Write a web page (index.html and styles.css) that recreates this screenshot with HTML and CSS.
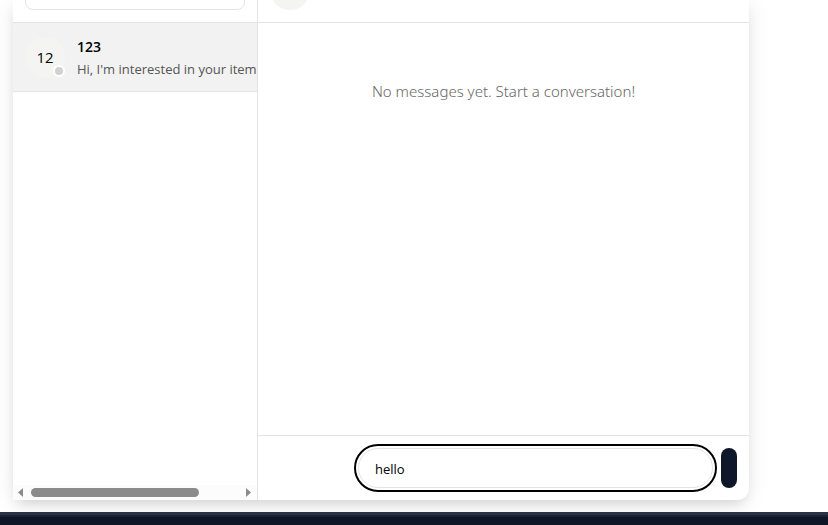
FILE: index.html
```html
<!DOCTYPE html>
<html lang="en">
<head>
<meta charset="utf-8">
<meta name="viewport" content="width=device-width, initial-scale=1">
<title>Messages</title>
<link rel="stylesheet" href="styles.css">
</head>
<body>
<main class="chat">
  <aside class="sidebar">
    <div class="search"><input class="search-input" type="search" aria-label="Search conversations"></div>
    <button class="conversation" type="button">
      <span class="avatar">12<span class="status"></span></span>
      <span class="summary">
        <span class="name">123</span>
        <span class="preview">Hi, I'm interested in your item</span>
      </span>
    </button>
    <div class="scrollbar" aria-hidden="true">
      <svg class="arrow" viewBox="0 0 5 9"><path d="M5 0V9L0 4.500Z"/></svg>
      <div class="track"><div class="thumb"></div></div>
      <svg class="arrow" viewBox="0 0 5 9"><path d="M0 0V9L5 4.500Z"/></svg>
    </div>
  </aside>
  <section class="thread">
    <header class="thread-header"><span class="contact-avatar"></span></header>
    <div class="messages"><p class="empty">No messages yet. Start a conversation!</p></div>
    <form class="composer">
      <input class="message-input" type="text" value="hello" aria-label="Message">
      <button class="send" type="submit" aria-label="Send"></button>
    </form>
  </section>
</main>
<footer class="footer"></footer>
</body>
</html>
```
FILE: styles.css
```css
* { box-sizing: border-box; }

body {
  margin: 0;
  min-height: 100vh;
  display: flex;
  flex-direction: column;
  overflow: hidden;
  background: #fff;
  color: #000;
  font-family: "Open Sans", "Noto Sans", sans-serif;
}

input, button { font: inherit; color: inherit; }

.chat {
  flex: 1;
  display: flex;
  margin: 0 79px 12px 13px;
  background: #fff;
  border-radius: 0 0 12px 0;
  box-shadow: 0 0 25px rgba(0, 0, 0, .07), 0 8px 14px -4px rgba(0, 0, 0, .14);
}

.sidebar {
  flex: 0 0 245px;
  display: flex;
  flex-direction: column;
  border-right: 1px solid #e4e4e4;
}

.search {
  height: 23px;
  display: flex;
  align-items: flex-end;
  padding: 0 12px 12px;
  border-bottom: 1px solid #e4e4e4;
  overflow: hidden;
}

.search-input {
  flex: 1;
  min-width: 0;
  height: 36px;
  border: 1px solid #e4e4e4;
  border-radius: 8px;
  background: #fff;
}

.conversation {
  display: flex;
  align-items: center;
  gap: 12px;
  height: 69px;
  padding: 0 0 0 12px;
  border: 0;
  border-bottom: 1px solid #e4e4e4;
  background: #f2f2f2;
  text-align: left;
  overflow: hidden;
}

.avatar {
  position: relative;
  flex: none;
  width: 40px;
  height: 40px;
  border-radius: 50%;
  background: #f4f4f3;
  font-size: 15px;
  line-height: 40px;
  text-align: center;
}

.status {
  position: absolute;
  right: 0;
  bottom: 0;
  width: 12px;
  height: 12px;
  border: 2px solid #fff;
  border-radius: 50%;
  background: #d1d1d1;
}

.summary {
  display: flex;
  flex-direction: column;
  white-space: nowrap;
}

.name {
  font-size: 14px;
  font-weight: 600;
  line-height: 24px;
}

.preview {
  color: #555;
  font-size: 13px;
  line-height: 20px;
}

.scrollbar {
  display: flex;
  align-items: center;
  gap: 8px;
  height: 15px;
  margin-top: auto;
  padding: 0 6px 0 5px;
  background: #fcfcfc;
}

.arrow {
  width: 5px;
  height: 9px;
  fill: #8b8b8b;
}

.track { flex: 1; }

.thumb {
  width: 81%;
  height: 9px;
  border-radius: 5px;
  background: #8b8b8b;
}

.thread {
  flex: 1;
  min-width: 0;
  display: flex;
  flex-direction: column;
}

.thread-header {
  height: 23px;
  display: flex;
  align-items: flex-end;
  padding: 0 12px 12px;
  border-bottom: 1px solid #e4e4e4;
  overflow: hidden;
}

.contact-avatar {
  flex: none;
  width: 40px;
  height: 40px;
  border-radius: 50%;
  background: #f4f4f3;
}

.messages {
  flex: 1;
  padding: 56px 16px;
}

.empty {
  margin: 0;
  color: #666;
  font-family: "Noto Sans", "Open Sans", sans-serif;
  font-size: 15px;
  font-weight: 300;
  line-height: 24px;
  text-align: center;
}

.composer {
  display: flex;
  gap: 8px;
  padding: 12px 12px 12px 100px;
  border-top: 1px solid #e4e4e4;
}

.message-input {
  flex: 1;
  min-width: 0;
  height: 40px;
  padding: 2px 16px 0;
  border: 1px solid #e4e4e4;
  border-radius: 20px;
  outline: 2px solid #000;
  outline-offset: 2px;
  background: #fff;
  font-size: 13px;
}

.send {
  width: 16px;
  height: 40px;
  padding: 0;
  border: 0;
  border-radius: 8px;
  background: #0f172a;
}

.footer {
  position: relative;
  height: 13px;
  border-top: 3px solid #2b3447;
  background: linear-gradient(#1a2233 2px, #0f1525 2px);
}
```
